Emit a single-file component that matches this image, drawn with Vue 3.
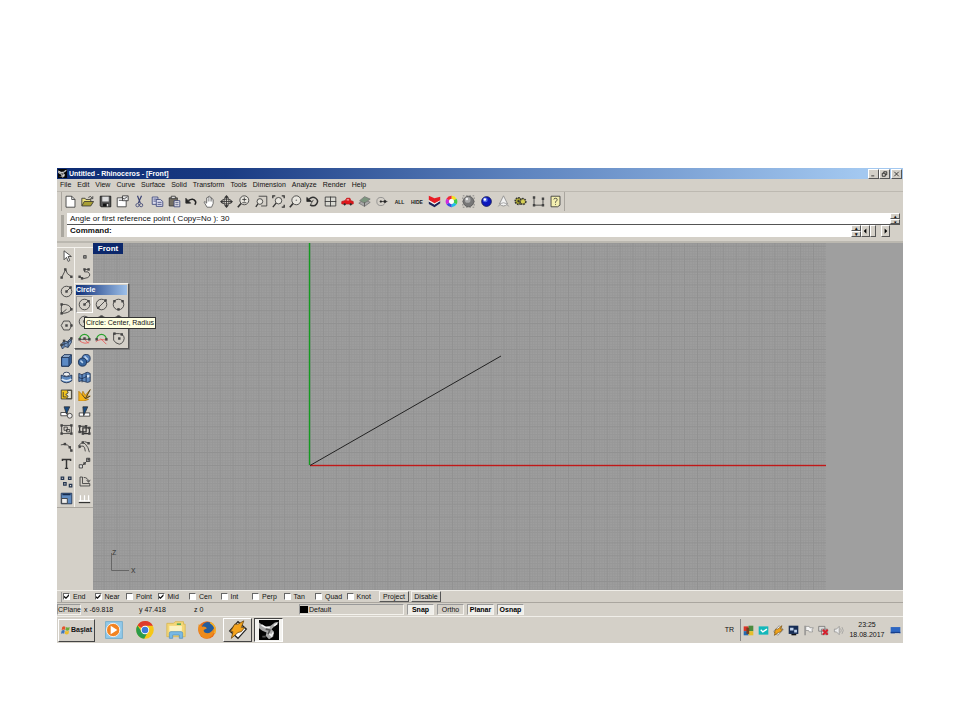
<script setup>
import { ref } from 'vue'

const menus = ['File', 'Edit', 'View', 'Curve', 'Surface', 'Solid', 'Transform', 'Tools', 'Dimension', 'Analyze', 'Render', 'Help']

const lens = '<circle cx="9" cy="6.500" r="5.500" fill="#e8e6df"/><path d="M5 10.500L1 15" stroke-width="2"/>'
const dots = (...pts) => pts.map(([x, y]) => `<rect x="${x - 1.5}" y="${y - 1.5}" width="3" height="3" fill="#444" stroke="none"/>`).join('')

const tools = [
  { name: 'New', art: '<path d="M2.500 1.500h7l4 4v9.500h-11z" fill="#fff"/><path d="M9.500 1.500v4h4" fill="none"/>' },
  { name: 'Open', art: '<path d="M1 13V4h4l1 1.500h6V8" fill="#e9df7c"/><path d="M1 13.500L4 8h11.500l-3.500 5.500z" fill="#a89f35"/><path d="M9 3q3-3 5 1M14.500 1.500v3h-3" fill="none"/>' },
  { name: 'Save', art: '<path d="M1.500 1.500h13v13h-12l-1-1z" fill="#555" stroke="#111"/><path d="M4 2h8v6H4z" fill="#ddd" stroke="none"/><path d="M5 10.500h7V14H5z" fill="#111" stroke="none"/><path d="M9.500 11h2v3h-2z" fill="#ddd" stroke="none"/>' },
  { name: 'Properties', art: '<path d="M1.500 3.500h11v11h-11z" fill="#fff"/><path d="M8 1h7v6H8z" fill="#eee"/><path d="M3.500 6.500h5M7 3l3 2 4-3" fill="none"/>' },
  { name: 'Cut', art: '<path d="M5.500 1L9 10M10.500 1L6.500 10" stroke="#3b4373" stroke-width="1.500"/><circle cx="5.500" cy="12.500" r="2" fill="none" stroke="#3b4373"/><circle cx="10" cy="12.500" r="2" fill="none" stroke="#3b4373"/>' },
  { name: 'Copy', art: '<path d="M1.500 2.500h7v9h-7z" fill="#dde" stroke="#343f75"/><path d="M6.500 5.500h5l3 2.500v6h-8z" fill="#dde" stroke="#343f75"/><path d="M3 5h4M3 7.500h3M8 9h5M8 11.500h5" stroke="#343f75"/>' },
  { name: 'Paste', art: '<path d="M1.500 3.500h10v10h-10z" fill="#746f63"/><path d="M4 1.500h5v3H4z" fill="#ddd"/><path d="M7.500 7h7v7.500h-7z" fill="#eee" stroke="#343f75"/><path d="M9 9.500h4M9 12h4" stroke="#343f75"/>' },
  { name: 'Undo', art: '<path d="M4 7q6-4 9 1 1 2-1 4" fill="none" stroke-width="2" stroke="#222"/><path d="M1 4v6h6z" fill="#222"/>' },
  { name: 'Pan', art: '<path d="M5 15L1.500 9q0-2 3 1V3.500q1.500-1 2 0V2q1.300-1.300 2 0v1q1.500-1 2 .5v1.500q1.500-.5 2 .5v5l-2 4.500z" fill="#fff" stroke="#555"/><path d="M6.500 4v4M8.700 3v5M10.700 4v4" stroke="#777"/>' },
  { name: 'Rotate view', art: '<path d="M8 2v12M2 8h12" stroke="#333"/><ellipse cx="8" cy="8" rx="6" ry="3" fill="none"/><ellipse cx="8" cy="8" rx="3" ry="5" fill="none"/><path d="M5 3.500L8 0l3 3.500zM5 12.500L8 16l3-3.500zM3 6L0 8l3 3zM13 6L16 8l-3 3z" fill="#333" stroke="none"/>' },
  { name: 'Zoom in or out', art: lens + '<path d="M6.500 5.500h5M9 3v5M6.500 9.500h5"/>' },
  { name: 'Zoom window', art: '<path d="M4.500 1.500h10v12h-7" fill="none"/><circle cx="6" cy="8" r="3.500" fill="#e8e6df"/><path d="M3.500 11L1 14.500" stroke-width="1.600"/>' },
  { name: 'Zoom extents', art: '<path d="M1 4V1h3M12 1h3v3M15 12v3h-3" fill="none" stroke-width="1.600"/><circle cx="8" cy="7" r="4" fill="#e8e6df"/><path d="M5 10l-4 5" stroke-width="1.600"/>' },
  { name: 'Zoom selected', art: lens + '<circle cx="9" cy="6.500" r="1" fill="#777" stroke="none"/>' },
  { name: 'Undo view', art: '<path d="M4 5q4-4 8-1t1 7q-3 4-8 1" fill="none" stroke-width="1.800"/><path d="M1 3v5h6z" fill="#222"/><path d="M6 11l3-5"/>' },
  { name: 'Viewports', art: '<path d="M1.500 2.500h13v11h-13z" fill="#d9d9d2"/><path d="M8 2v12M1 8h14"/>' },
  { name: 'Right view', art: '<path d="M1 8l4-1 2-3h4l1 3 3 1v3H1z" fill="#e1171b" stroke="#c0171b"/><circle cx="4.500" cy="11.500" r="1" fill="#222"/><circle cx="12" cy="11.500" r="1" fill="#222"/><path d="M7 6h3" stroke="#fff"/>' },
  { name: 'Set plane', art: '<path d="M1 10l7-4 7 3-7 5z" fill="#aaa" stroke="#777"/><path d="M2 7l6-5 7 3-7 5z" fill="#7d967f" stroke="#777"/><path d="M8 14V9" stroke="#555"/>' },
  { name: 'Points', art: '<circle cx="6" cy="8" r="5" fill="none" stroke="#888"/><path d="M6 8h8"/><circle cx="6" cy="8" r="1"/><rect x="10" y="7" width="2" height="2"/>' },
  { name: 'Select all', text: 'ALL' },
  { name: 'Hide', text: 'HIDE' },
  { name: 'Layers', art: '<path d="M1 8l7 4 7-5v3l-7 5-7-4z" fill="#1d2459" stroke="none"/><path d="M1 1l7 3 7-2v5L8 10 1 6z" fill="#e81d25" stroke="none"/><path d="M1 7l7 4 7-4" stroke="#fff" fill="none"/>' },
  { name: 'Colors', art: '<g fill="none" stroke-width="4"><path d="M8 3a5 5 0 0 1 4.500 2.500" stroke="#f6df20"/><path d="M12.500 5.500a5 5 0 0 1 0 5" stroke="#43ce48"/><path d="M12.500 10.500A5 5 0 0 1 8 13" stroke="#20bde8"/><path d="M8 13a5 5 0 0 1-4.500-2.500" stroke="#3c49e0"/><path d="M3.500 10.500a5 5 0 0 1 0-5" stroke="#cf2ade"/><path d="M3.500 5.500A5 5 0 0 1 8 3" stroke="#ef2835"/></g><circle cx="8" cy="8" r="3" fill="#fff" stroke="none"/>' },
  { name: 'Shade', art: '<rect x="1" y="1" width="14" height="14" fill="none" stroke-dasharray="2 2" stroke="#777"/><circle cx="8" cy="8" r="6.500" fill="#777" stroke="#555"/><circle cx="7" cy="6" r="3.500" fill="#aaa" stroke="none"/><circle cx="6" cy="5" r="1.500" fill="#eee" stroke="none"/>' },
  { name: 'Render', art: '<circle cx="8" cy="8" r="6" fill="#0d18bd" stroke="#111653"/><circle cx="6.500" cy="6" r="3" fill="#4c64e8" stroke="none"/><circle cx="6" cy="5.500" r="1.500" fill="#fff" stroke="none"/>' },
  { name: 'Spotlight', art: '<path d="M8 1L3 11q5 5 10 0z" fill="#f2f2f2" stroke="#888"/><path d="M3 11q5-3 10 0M1 14l3-2M15 14l-3-2" fill="none" stroke="#999"/>' },
  { name: 'Options', art: '<circle cx="5.500" cy="7.500" r="4" fill="#b3ad31" stroke-dasharray="2 1" stroke-width="2"/><circle cx="11" cy="8" r="3.500" fill="#d6cf55" stroke-dasharray="2 1" stroke-width="2"/><circle cx="5.500" cy="7.500" r="1" fill="#222"/>' },
  { name: 'Dimension', art: '<path d="M2.500 3v9.500h11V5" fill="none"/><path d="M1 1.500h3v3H1zM12 3h3v3h-3zM1 11h3v3H1zM12 11h3v3h-3z" fill="#444" stroke="none"/>' },
  { name: 'Help', art: '<path d="M2.500 1.500h11v11l-3 2h-8z" fill="#f3efb0"/><path d="M6 5.500q0-1.500 2-1.500t2 1.500q0 1.500-2 3v1" fill="none"/><rect x="7.500" y="11" width="1" height="1" fill="#333" stroke="none"/>' },
]

const ring = '<circle cx="8" cy="8" r="6.500" fill="none"/>'
const curveTools = [
  ['Select', '<path d="M5 1v11l3-3 2 5 2-1-2-5h4z" fill="#fff"/>'],
  ['Point', '<rect x="7" y="7" width="3" height="3" fill="#999"/>'],
  ['Polyline', '<path d="M2 13l5-10 2 5 5 4" fill="none"/>' + dots([2, 13], [6.5, 3], [14, 12])],
  ['Free curve', '<path d="M2 12q5 4 10 1t0-7H8V3h5" fill="none"/>' + dots([2, 12], [8, 3], [13, 3], [5, 14])],
  ['Circle', ring + '<path d="M8 8l5-5"/>' + dots([8, 8], [13, 3])],
  ['Ellipse', ring + dots([8, 8])],
  ['Arc', '<path d="M2 14L8 9M2 3q10-1 12 6M2 14q9 0 12-5M2 3q-1 6 0 11" fill="none"/>' + dots([2, 3], [2, 14], [14, 9])],
  ['Rectangle', '<path d="M2 3h12v10H2z" fill="none"/>' + dots([2, 3], [14, 13])],
  ['Polygon', '<path d="M1.500 8l3-5.500h7l3 5.500-3 5.500h-7z" fill="none"/>' + dots([8, 8], [14, 8])],
  ['Curve from object', ring + dots([8, 8])],
  ['Surface', '<path d="M1 11l4-5 4 1 5-5v6l-4 6-4-1-3 3z" fill="#7596c1" stroke="#24354f"/><path d="M5 6v7M10 6v8M2 11q6-1 12-6" fill="none" stroke="#24354f"/>' + dots([2, 11], [14, 3], [5, 6])],
  ['Surface corner', '<path d="M2 4l12 2-2 8-9-1z" fill="#557aab"/>'],
  ['Box', '<path d="M2 4l3-3h9v10l-3 4H2z" fill="#36639e" stroke="#172b4e"/><path d="M2 4h9v11H2z" fill="#5c8ac4" stroke="#172b4e"/><path d="M2 4l3-3h9l-3 3z" fill="#a8c5e6" stroke="#172b4e"/>'],
  ['Spheres', '<circle cx="10" cy="5.500" r="5" fill="#527eb9" stroke="#172b4e"/><circle cx="5.500" cy="10" r="5" fill="#37659e" stroke="#172b4e"/><path d="M3 8l3 3M8 3l4 4" stroke="#bcd4ef" stroke-width="2"/>'],
  ['Cylinder', '<path d="M1.500 5q6.500 4 13 0v7q-6.500 5-13 0z" fill="#5f8abf" stroke="#172b4e"/><ellipse cx="8" cy="4" rx="4" ry="2.500" fill="#eee" stroke="#172b4e"/><path d="M2 10q6 4 12 0" fill="none" stroke="#dce8f4" stroke-width="2"/>'],
  ['Mesh', '<path d="M1 3q4 3 7 0t7 0v10q-3 2-7 0t-7 0z" fill="#5f8abf" stroke="#172b4e"/><path d="M5 4v10M10 3v10M1 8q4 3 7 0t7 0" fill="none" stroke="#172b4e"/><path d="M11 5h3v3h-3z" fill="#dce8f4" stroke="none"/>'],
  ['Join', '<path d="M1.500 2.500h13v11h-13z" fill="#f4c51d"/><path d="M9 3h5v10H8l2-3-3-2 3-2z" fill="#e9e7d9"/><path d="M4 5v6h4" fill="none"/>'],
  ['Explode', '<path d="M1 4l4 4 1-4 3 5 6-7-4 8h4l-5 3 3 1-6 2H1z" fill="#f6b418" stroke="#b47c1a"/><path d="M5 8l4 5 6-11M9 13l6-3" fill="none"/>'],
  ['Trim', '<path d="M1 8h8v4H1z" fill="#fff"/><path d="M5 1h7l-4 9z" fill="#174c85"/><circle cx="12" cy="12" r="3" fill="#eee"/>'],
  ['Split', '<path d="M1.500 8.500h13v4h-13z" fill="#fff"/><path d="M6 1h6L7 12z" fill="#174c85"/>'],
  ['Group', '<path d="M2 3h12v10H2zM5 5h4v4H5zM8 8h4v3H8z" fill="none"/>' + dots([2, 3], [14, 3], [2, 13], [14, 13])],
  ['Ungroup', '<path d="M2 4h8v7H2zM6 6h8v7H6z" fill="none" stroke-width="1.500"/>' + dots([2, 4], [14, 6], [2, 11], [14, 13], [10, 4], [6, 13])],
  ['Edit points', '<path d="M1 6q10-3 13 7" fill="none"/>' + dots([6, 5], [12, 9], [14, 13])],
  ['Offset curve', '<path d="M1 7q4-6 8-2t5 10M1 10q7-7 8 4M8 2l6 2" fill="none"/>' + dots([6, 3], [13, 4], [2, 8])],
  ['Text', '<path d="M3 5V3h10v2M8 3v11M6 14h4" fill="none" stroke-width="1.800"/>'],
  ['Move', '<path d="M5 11l7-7"/><path d="M1.500 9.500h4v4h-4zM10.500 1.500h4v4h-4z" fill="#ddd"/>' + dots([8, 8], [13, 3])],
  ['Copy objects', '<path d="M1.500 2.500h3v3h-3zM10.500 2.500h3v3h-3zM4.500 9.500h3v3h-3zM11.500 11.500h3v3h-3z" fill="#ddd" stroke="#24354f" stroke-width="1.500"/>'],
  ['Rotate', '<path d="M2.500 2.500h3v8h9v3h-12zM7 3q5 0 6 5M10.500 6l2.500 3 2-3" fill="none"/>'],
  ['Scale', '<path d="M1.500 1.500h13v13h-13z" fill="#5f8abf" stroke="#172b4e"/><path d="M2 8h7v6H2z" fill="#eee"/><path d="M3 3h10" stroke="#172b4e" stroke-width="2"/>'],
  ['Align', '<path d="M1 13h14" stroke-width="1.500"/><path d="M3 4v6M8 4v6M13 4v6M1 11h14" stroke="#fff" stroke-width="1.500"/>'],
]

const circleTools = [
  ['Center, radius', ring + '<path d="M8 8l4-4"/>' + dots([8, 8], [13, 4])],
  ['Diameter', ring + '<path d="M4 12l8-8"/>' + dots([4, 12], [13, 3])],
  ['Three points', ring + dots([3, 4], [13, 4], [8, 14])],
  ['Around curve', ring + dots([8, 8])],
  ['Tangent', ring + dots([8, 2])],
  ['Tangent to three curves', ring + dots([8, 2])],
  ['Tangent, radius', '<path d="M2 9a6 6 0 0 1 12 0" fill="none" stroke="#2aa22d" stroke-width="1.500"/><path d="M2 9h12"/><path d="M2 11q7 5 12 1M7 8l6 6" fill="none" stroke="#e75050"/>' + dots([8, 8], [2, 9], [14, 9])],
  ['Vertical', '<path d="M2 9a6 6 0 0 1 12 0" fill="none" stroke="#2aa22d" stroke-width="1.500"/><path d="M1 12q4-4 14-2M7 8l7 7" fill="none" stroke="#e75050"/>' + dots([2, 9], [14, 9])],
  ['Deformable', '<path d="M2 2h7q6 1 6 6-1 6-6 7-5-1-7-5z" fill="none"/>' + dots([3, 2], [9, 8], [12, 3])],
]

const snaps = ref([
  ['End', true], ['Near', true], ['Point', false], ['Mid', true], ['Cen', false],
  ['Int', false], ['Perp', false], ['Tan', false], ['Quad', false], ['Knot', false],
].map(([name, on]) => ({ name, on })))

const modes = [['Snap', true], ['Ortho', false], ['Planar', true], ['Osnap', true]]

const rhino = '<rect width="24" height="24" fill="#050505"/><path d="M0 3l7 5 7-1 5-4 5-1-6 6-3 3 3 3-1 6-5 3-4-4 1-4-5-2-5-4z" fill="#aaa"/><path d="M3 6l5 3 5 0M11 15l4 4 2-4M18 7l4-3" fill="none" stroke="#f4f4f4" stroke-width="2"/><path d="M8 11l5 1-2 5M4 20h4" fill="none" stroke="#555" stroke-width="2"/>'
const bolt = '<path d="M2 13L12 2l10 9-10 11z" fill="#fff" stroke="#222" stroke-width="1.500"/><path d="M3 14L8 5h4l7-4-3 8h4l-4 5-4 1-8 7 2-8z" fill="#f3a31d" stroke="#6d4b15"/>'

const launchers = [
  { name: 'Media player', art: '<rect x="2" y="2" width="20" height="20" fill="#92c9e9" stroke="#6aa9cc"/><circle cx="11" cy="12" r="8" fill="#f28321" stroke="#fff"/><path d="M8 7l8 5-8 5z" fill="#fff"/>' },
  { name: 'Chrome', art: '<circle cx="12" cy="12" r="10.500" fill="#f6c716"/><path d="M12 12L3 6.500A10.500 10.500 0 0 1 21.500 7H12z" fill="#df3b2d"/><path d="M3 6.500A10.500 10.500 0 0 0 11 22.500l4-7.500-7-1z" fill="#2b9b4a"/><circle cx="12" cy="12" r="5" fill="#fff"/><circle cx="12" cy="12" r="4" fill="#3c7bd9"/>' },
  { name: 'Explorer', art: '<path d="M1 4h8l2-2h10v3h2v15H1z" fill="#f3d675" stroke="#d9b650"/><path d="M4 7h15v7H4z" fill="#fbf2c2"/><path d="M4 22v-6q0-2 2-2h12q2 0 2 2v6h-4v-4H8v4z" fill="#79b9e4" stroke="#5a97c3"/><path d="M13 5h5" stroke="#59a957" stroke-width="2"/>' },
  { name: 'Firefox', art: '<circle cx="12" cy="12" r="10.500" fill="#e86b18"/><circle cx="13" cy="10" r="7.500" fill="#245c9c"/><path d="M2 5q3 1 4 3 4-1 6 2l-4 2q0 4 5 4 5-1 7-6 2 5-2 9-5 5-11 2-7-5-5-16z" fill="#ed8b1c"/><path d="M16 3q8 5 5 13" fill="none" stroke="#f6b22a" stroke-width="2"/>' },
  { name: 'Winamp', art: bolt, state: 'raised' },
  { name: 'Rhinoceros', art: rhino, state: 'pressed' },
]

const tray = [
  ['Antivirus', '<path d="M1 2h7v7H1z" fill="#da3427"/><path d="M8 1h7v8H8z" fill="#4b8b3d"/><path d="M1 9h7v6H1z" fill="#246bb0"/><path d="M8 9h7v6H8z" fill="#e6bf2a"/><path d="M5 4h4v9H5z" fill="#753f20"/>'],
  ['Updates', '<rect x="1" y="2" width="14" height="12" fill="#12b7ba"/><path d="M4 7l3 3 6-4" fill="none" stroke="#fff" stroke-width="2"/>'],
  ['Winamp agent', '<path d="M1 9l8-8 6 6-8 8z" fill="#eee" stroke="#777"/><path d="M2 11l2-5h3l6-5-2 5h3l-3 4-3 1-6 4 1-4z" fill="#efa31b" stroke="#7a5212"/>'],
  ['Display', '<rect x="1" y="1" width="14" height="12" fill="#172d55"/><path d="M3 4h5v4H3zM9 7h4v4H9z" fill="#bfd2ec"/><path d="M5 14h7" stroke="#111" stroke-width="2"/>'],
  ['Action center', '<path d="M3 1v14" stroke="#777" stroke-width="1.500"/><path d="M4 2h5l1 2h5l-2 3 1 3H9L8 8H4z" fill="#f5f5f5" stroke="#888"/>'],
  ['Network', '<path d="M1 2h9v7H1zM5 6h9v8H5z" fill="#ddd" stroke="#666"/><path d="M7 7l7 7M14 7l-7 7" stroke="#d51e2b" stroke-width="3"/>'],
  ['Volume', '<path d="M2 6h3l4-4v12l-4-4H2z" fill="#eee" stroke="#888"/><path d="M11 5q2 3 0 6M13 3q4 5 0 10" fill="none" stroke="#999"/>'],
]
</script>

<template>
  <main class="page">
    <section class="desktop">
      <header class="titlebar">
        <svg class="title-icon" viewBox="0 0 24 24" aria-hidden="true" v-html="rhino" />
        <h1>Untitled - Rhinoceros - [Front]</h1>
        <div class="window-buttons">
          <button aria-label="Minimize"><svg viewBox="0 0 8 8"><path d="M1 6.500h4" /></svg></button>
          <button aria-label="Restore"><svg viewBox="0 0 8 8"><path d="M3 3V1h4v4H5M1 3h4v4H1z" /></svg></button>
          <button class="close" aria-label="Close"><svg viewBox="0 0 8 8"><path d="M1 1l6 6M7 1L1 7" /></svg></button>
        </div>
      </header>

      <nav class="menu">
        <a v-for="m in menus" :key="m" href="#">{{ m }}</a>
      </nav>

      <div class="toolbar">
        <button v-for="t in tools" :key="t.name" class="tool" :aria-label="t.name">
          <b v-if="t.text">{{ t.text }}</b>
          <svg v-else class="glyph" viewBox="0 0 16 16" v-html="t.art" />
        </button>
      </div>

      <div class="command">
        <div class="grip"></div>
        <div class="command-rows">
          <div class="command-row">
            <output>Angle or first reference point ( Copy=No ): 30</output>
            <div class="spin"><button aria-label="Scroll up">▴</button><button aria-label="Scroll down">▾</button></div>
          </div>
          <div class="command-row prompt">
            <label for="command">Command:</label>
            <input id="command" type="text" autocomplete="off" />
            <div class="scroller">
              <div class="spin"><button aria-label="Previous">▴</button><button aria-label="Next">▾</button></div>
              <button class="arrow" aria-label="Scroll left"><svg viewBox="0 0 8 8"><path d="M5 1v6L2 4z" /></svg></button>
              <span class="thumb"></span>
              <span class="track"></span>
              <button class="arrow" aria-label="Scroll right"><svg viewBox="0 0 8 8"><path d="M3 1v6l3-3z" /></svg></button>
            </div>
          </div>
        </div>
      </div>

      <div class="workspace">
        <aside class="sidebar">
          <div class="side-tools">
            <button v-for="[name, art] in curveTools" :key="name" class="tool" :aria-label="name">
              <svg class="glyph" viewBox="0 0 16 16" v-html="art" />
            </button>
          </div>
        </aside>
        <div class="viewport">
          <svg class="canvas" aria-label="Front viewport">
            <defs>
              <pattern id="minor" x="217" y="222" width="2.580" height="2.580" patternUnits="userSpaceOnUse">
                <path d="M0 .5H3M.5 0V3" class="minor" />
              </pattern>
              <pattern id="major" x="217" y="222" width="12.900" height="12.900" patternUnits="userSpaceOnUse">
                <path d="M0 .5H13M.5 0V13" class="major" />
              </pattern>
            </defs>
            <rect width="733" height="100%" fill="url(#minor)" />
            <rect width="733" height="100%" fill="url(#major)" />
            <path class="axis-z soft" d="M216.500 0V222" />
            <path class="axis-x soft" d="M217 222.500H733" />
            <path class="axis-z" d="M216.500 0V222" />
            <path class="axis-x" d="M217 222.500H733" />
            <path class="line" d="M217 222.500L408 113" />
          </svg>
          <h2 class="view-title">Front</h2>
          <svg class="axes" viewBox="0 0 28 28" role="img" aria-label="Axes">
            <path d="M2.500 5V22.500H20" />
            <text x="3" y="7">z</text>
            <text x="22" y="25">x</text>
          </svg>
        </div>

        <div class="palette">
          <h2>Circle</h2>
          <div class="palette-grid">
            <button v-for="[name, art] in circleTools" :key="name" class="tool" :aria-label="name">
              <svg class="glyph" viewBox="0 0 16 16" v-html="art" />
            </button>
          </div>
          <div class="tooltip" role="tooltip">Circle: Center, Radius</div>
        </div>
      </div>

      <div class="osnap">
        <div class="snap-list">
          <label v-for="s in snaps" :key="s.name"><input v-model="s.on" type="checkbox" />{{ s.name }}</label>
        </div>
        <button>Project</button>
        <button>Disable</button>
      </div>

      <div class="status">
        <button class="cplane">CPlane</button>
        <span class="coord">x -69.818</span>
        <span class="coord">y 47.418</span>
        <span class="coord last">z 0</span>
        <button class="layer"><i></i>Default</button>
        <button v-for="[name, on] in modes" :key="name" class="mode" :class="{ on }">{{ name }}</button>
      </div>

      <footer class="taskbar">
        <button class="start">
          <svg viewBox="0 0 16 16" aria-hidden="true"><path d="M2 3q3-2 5 0L6 8Q4 6 1 8z" fill="#e4532c" /><path d="M8 3q3 2 6 0l-1 5q-3 2-6 0z" fill="#6aab3b" /><path d="M1 9q3-2 5 0l-1 5q-2-2-5 0z" fill="#3c76bd" /><path d="M7 9q3 2 6 0l-1 5q-3 2-6 0z" fill="#edbd2c" /></svg>
          Başlat
        </button>
        <div class="launchers">
          <button v-for="l in launchers" :key="l.name" :class="l.state" :aria-label="l.name">
            <svg viewBox="0 0 24 24" v-html="l.art" />
          </button>
        </div>
        <span class="lang">TR</span>
        <div class="tray">
          <button v-for="[name, art] in tray" :key="name" :aria-label="name"><svg viewBox="0 0 16 16" v-html="art" /></button>
          <time datetime="2017-08-18T23:25"><span>23:25</span><span>18.08.2017</span></time>
          <button aria-label="Show desktop"><svg viewBox="0 0 16 16"><path d="M1 3h14v9H1z" fill="#2e67c2" /><path d="M1 10h14v2H1z" fill="#173f8c" /><path d="M7 13h7" stroke="#ccc" stroke-width="2" /></svg></button>
        </div>
      </footer>
    </section>
  </main>
</template>

<style>
body { background: #fff; }
</style>

<style scoped>
* { box-sizing: border-box; }
.page {
  min-height: 100vh;
  padding: 168px 57px 77px;
  display: flex;
  font: 7px/10px "Liberation Sans", Arial, sans-serif;
  color: #111;
}
.desktop {
  flex: 1;
  min-width: 0;
  display: flex;
  flex-direction: column;
  background: #d4d0c8;
}
button {
  margin: 0;
  padding: 0;
  border: 0;
  background: none;
  color: inherit;
  font: inherit;
}
h1, h2 { margin: 0; font: inherit; font-weight: bold; }
svg { display: block; }
.titlebar {
  height: 11px;
  display: flex;
  align-items: center;
  gap: 2px;
  padding: 0 1px;
  color: #fff;
  background: linear-gradient(90deg, #0d2b73 0%, #1a3b83 20%, #5e84bf 55%, #a3c8f0 95%);
}
.title-icon { width: 9px; height: 9px; }
.window-buttons { margin-left: auto; display: flex; }
.window-buttons button {
  width: 11px;
  height: 10px;
  padding: 1px;
  background: #d4d0c8;
  border: 1px solid;
  border-color: #fff #555 #555 #fff;
}
.window-buttons .close { margin-left: 1px; }
.window-buttons svg { width: 7px; height: 6px; margin: auto; fill: none; stroke: #111; stroke-width: 1; }
.menu {
  height: 13px;
  display: flex;
  align-items: center;
  gap: 6px;
  padding: 0 3px;
  border-bottom: 1px solid #bdb9b1;
}
.menu a { color: inherit; text-decoration: none; }
.toolbar {
  height: 19px;
  display: grid;
  grid-template-columns: repeat(29, 1fr);
  width: 504px;
  margin: 0 0 2px 4px;
  border-left: 1px solid #aaa69f;
  border-right: 1px solid #aaa69f;
}
.tool {
  display: flex;
  align-items: center;
  justify-content: center;
  min-width: 0;
}
.tool b { font-size: 5px; color: #222; }
.glyph { width: 13px; height: 13px; stroke: #333; stroke-width: 1; }
.command { display: flex; height: 24px; padding-right: 3px; }
.grip { width: 3px; margin: 2px 3px 0 4px; background: #aaa79f; }
.command-rows { flex: 1; display: flex; flex-direction: column; min-width: 0; }
.command-row {
  height: 12px;
  display: flex;
  background: linear-gradient(#fff, #fff) no-repeat 0 0 / calc(100% - 10px) 100%;
  font-size: 8px;
  line-height: 11px;
  padding-left: 3px;
}
.command-row:first-child { border-bottom: 1px solid #555; }
.command-row output { flex: 1; }
.prompt { font-weight: bold; padding-right: 10px; }
.prompt input { flex: 1; min-width: 0; border: 0; padding: 0 2px; background: none; font: inherit; outline: none; }
.spin { width: 10px; display: flex; flex-direction: column; background: #d4d0c8; }
.spin button {
  flex: 1;
  font-size: 5px;
  line-height: 4px;
  border: 1px solid;
  border-color: #fff #555 #555 #fff;
  overflow: hidden;
}
.scroller { display: flex; width: 39px; background: #d4d0c8; }
.arrow, .thumb { width: 9px; border: 1px solid; border-color: #fff #555 #555 #fff; }
.arrow svg { width: 7px; height: 8px; fill: #000; }
.thumb { width: 6px; }
.track { flex: 1; }
.workspace {
  position: relative;
  flex: 1;
  display: flex;
  min-height: 347px;
  margin-top: 6px;
  box-shadow: 0 -2px #bbb8b0, 0 -1px #eeece7;
}
.sidebar { width: 36px; padding-top: 4px; }
.side-tools {
  height: 261px;
  display: grid;
  grid-template: repeat(15, 1fr) / 1fr 1fr;
  border-top: 1px solid #f4f2ed;
  border-bottom: 1px solid #aaa69f;
  background: linear-gradient(90deg, #f5f3ef, #f5f3ef) no-repeat 17px 0 / 1px 100%;
}
.viewport { position: relative; flex: 1; min-width: 0; background: #9f9f9f; }
.canvas { position: absolute; inset: 0; width: 100%; height: 100%; }
.minor { stroke: #909090; stroke-width: 1; opacity: 0.5; }
.major { stroke: #888; stroke-width: 1; opacity: 0.45; }
.axis-z { stroke: #149a20; stroke-width: 1; }
.axis-x { stroke: #c01818; stroke-width: 1; }
.soft { stroke-width: 3; opacity: 0.2; }
.line { stroke: #222; stroke-width: 1; }
.view-title {
  position: absolute;
  top: 0;
  left: 0;
  width: 30px;
  color: #fff;
  background: #0b276b;
  text-align: center;
  line-height: 11px;
  font-size: 8px;
}
.axes { position: absolute; left: 16px; bottom: 14px; width: 28px; height: 28px; fill: none; stroke: #666; }
.axes text { fill: #444; stroke: none; font: 9px "Liberation Sans", sans-serif; }
.palette {
  position: absolute;
  top: 40px;
  left: 17px;
  width: 55px;
  padding: 1px;
  background: #d4d0c8;
  border: 1px solid;
  border-color: #f4f2ed #555 #555 #f4f2ed;
  box-shadow: 1px 1px #777;
}
.palette h2 { line-height: 10px; color: #fff; background: linear-gradient(90deg, #0e2e78, #9dc0e9); }
.palette-grid { display: grid; grid-template: repeat(3, 17px) / repeat(3, 1fr); padding-top: 1px; }
.palette-grid .tool:first-child { border: 1px solid; border-color: #999 #fff #fff #999; }
.tooltip {
  position: absolute;
  top: 33px;
  left: 9px;
  padding: 0 1px;
  white-space: nowrap;
  color: #111;
  background: #ffffe1;
  border: 1px solid #333;
}
.osnap { display: flex; align-items: center; height: 12px; gap: 2px; padding-left: 4px; border-top: 1px solid #efede8; }
.snap-list { width: 316px; display: grid; grid-template-columns: repeat(10, 1fr); border-left: 1px solid #999; }
.snap-list label { display: flex; align-items: center; gap: 3px; padding-left: 1px; }
.snap-list input {
  appearance: none;
  width: 7px;
  height: 7px;
  margin: 0;
  background: #fff;
  border: 1px solid;
  border-color: #666 #fff #fff #666;
  display: grid;
  place-items: center;
}
.snap-list input:checked::before {
  content: "";
  width: 5px;
  height: 5px;
  background: #111;
  clip-path: polygon(0 35%, 40% 65%, 100% 0, 100% 40%, 40% 100%, 0 70%);
}
.osnap button {
  width: 30px;
  height: 11px;
  line-height: 9px;
  border: 1px solid;
  border-color: #f4f2ed #555 #555 #f4f2ed;
}
.status { display: flex; align-items: center; height: 14px; gap: 3px; border-top: 1px solid #aaa69f; }
.status button { height: 11px; line-height: 9px; border: 1px solid; border-color: #999 #f4f2ed #f4f2ed #999; }
.status .cplane { width: 24px; }
.coord { width: 52px; white-space: nowrap; }
.coord.last { width: 102px; }
.status .layer { width: 105px; display: flex; align-items: center; gap: 1px; }
.layer i { width: 8px; height: 7px; background: #000; }
.status .mode { width: 27px; }
.status .mode.on { font-weight: bold; background: #efeeea; color: #000; }
.taskbar { display: flex; align-items: center; height: 27px; border-top: 1px solid #f0eee9; }
.start {
  display: flex;
  align-items: center;
  justify-content: center;
  width: 37px;
  height: 23px;
  margin-left: 1px;
  font-weight: bold;
  border: 1px solid;
  border-color: #fff #444 #444 #fff;
}
.start svg { width: 10px; height: 10px; }
.launchers { display: flex; gap: 2px; margin-left: 4px; }
.launchers button { width: 29px; height: 24px; display: grid; place-items: center; border: 1px solid transparent; }
.launchers svg { width: 20px; height: 20px; }
.launchers .raised { border-color: #fff #444 #444 #fff; }
.launchers .pressed { border-color: #444 #fff #fff #444; background: #f4f3f0; }
.lang { margin-left: auto; margin-right: 6px; }
.tray { height: 22px; display: flex; align-items: center; gap: 4px; padding: 0 2px; border-left: 1px solid #888; }
.tray svg { width: 11px; height: 11px; }
.tray time { display: flex; flex-direction: column; align-items: center; width: 38px; }
</style>
